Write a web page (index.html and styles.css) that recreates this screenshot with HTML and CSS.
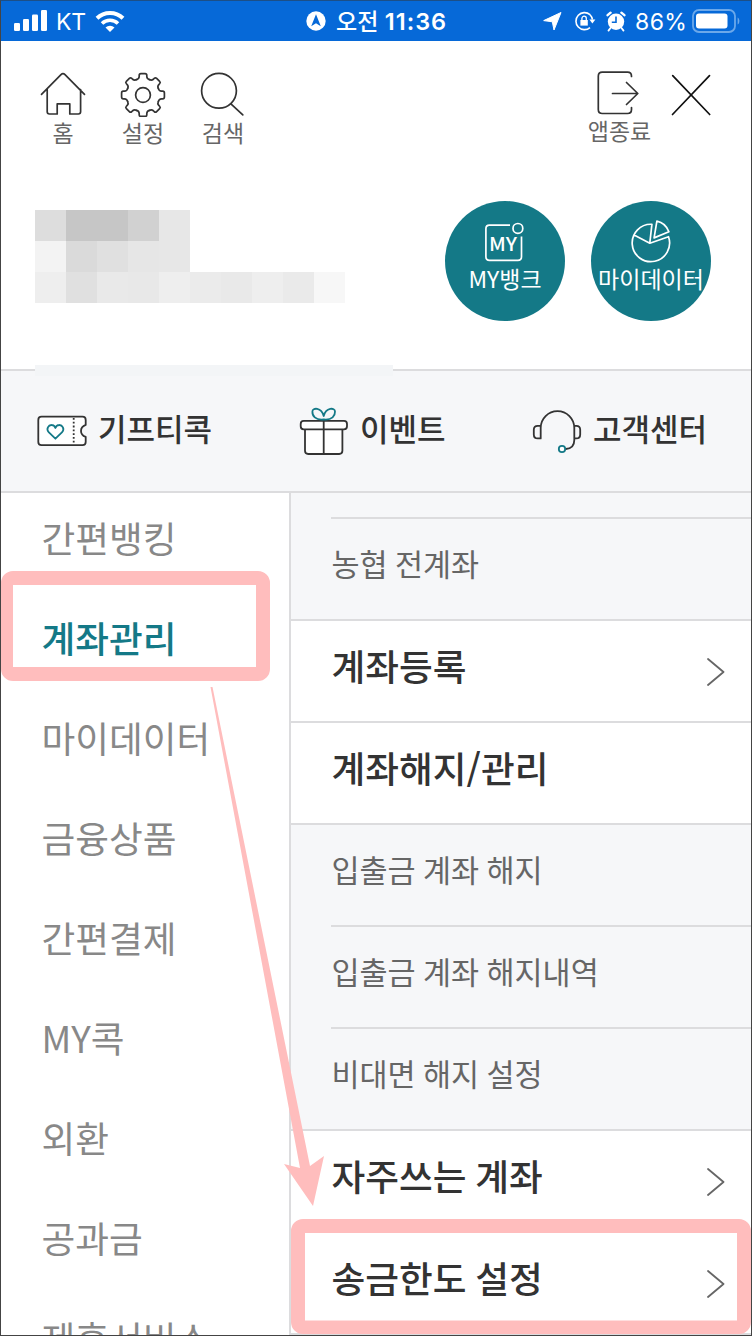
FILE: index.html
```html
<!DOCTYPE html>
<html lang="ko">
<head>
<meta charset="utf-8">
<title>전체메뉴</title>
<link rel="stylesheet" href="styles.css">
</head>
<body>
<div class="screen">
  <div class="status">
    <div class="status-left">
      <svg width="33" height="22" viewBox="14 10 33 22" fill="#fff"><rect x="14" y="23" width="6" height="8" rx="1.3"/><rect x="23" y="19" width="6" height="12" rx="1.3"/><rect x="32" y="14.5" width="6" height="16.5" rx="1.3"/><rect x="41" y="10" width="6" height="21" rx="1.3"/></svg>
      <span class="carrier">KT</span>
      <svg width="30" height="22" viewBox="0 0 30 22" fill="none" stroke="#fff" stroke-width="4"><path d="M2 8.3a18.6 18.6 0 0 1 26 0"/><path d="M7 13.5a11.5 11.5 0 0 1 16 0" stroke-width="3.6"/><path d="M10.5 17.6a6.5 6.5 0 0 1 9 0L15 22z" fill="#fff" stroke="none"/></svg>
    </div>
    <div class="status-mid">
      <svg width="20" height="20" viewBox="0 0 20 20"><circle cx="10" cy="10" r="9.7" fill="#fff"/><path d="M10 3.3l4.8 12L10 12.2l-4.8 3.1z" fill="#0669d8"/></svg>
      <span class="time">오전 <b>11:36</b></span>
    </div>
    <div class="status-right">
      <svg width="19" height="19" viewBox="0 0 19 19"><path d="M18 .5L11 18 9.3 9.8 .7 8.6z" fill="#fff" stroke="#fff" stroke-linejoin="round"/></svg>
      <svg class="lock" width="22" height="20" viewBox="0 0 22 20" fill="none" stroke="#fff" stroke-width="1.6"><path d="M16 3.7A8.5 8.5 0 1 0 16 16.6M16 3.7a8.5 8.5 0 0 1 2.5 5"/><path d="M15.4 8.4h6l-3 4z" fill="#fff" stroke="none"/><rect x="6.4" y="9" width="7.4" height="5.6" fill="#fff" stroke="none"/><path d="M7.9 9V7.4a2.2 2.2 0 0 1 4.4 0V9" stroke-width="1.3"/></svg>
      <svg class="alarm" width="20" height="21" viewBox="0 0 20 21"><circle cx="10" cy="10.8" r="8.2" fill="#fff"/><path d="M10 5.5v5.7H5.8" fill="none" stroke="#0669d8" stroke-width="1.6"/><path d="M1.6 4.2l3-2.5M18.4 4.2l-3-2.5" stroke="#fff" stroke-width="2.4" stroke-linecap="round"/><path d="M4.5 17l-2 2.6M15.5 17l2 2.6" stroke="#fff" stroke-width="1.8" stroke-linecap="round"/></svg>
      <span class="percent">86%</span>
      <svg class="battery" width="49" height="24" viewBox="0 0 49 24"><rect x="1" y="1" width="42" height="22" rx="6" fill="none" stroke="#6ba8ea" stroke-width="1.8"/><rect x="4" y="4.5" width="31.5" height="15" rx="3" fill="#fff"/><path d="M45.6 8.5c2.4 1 2.4 6 0 7z" fill="#6ba8ea"/></svg>
    </div>
  </div>

  <header class="top">
    <nav class="tools">
      <a class="tool"><svg width="46" height="46" viewBox="40 71 46 46"><path d="M41.5 94.3L61 74.6q2-2 4 0l19.500 19.700M47.200 89.500v22.300q0 2.200 2.200 2.200h7.800v-10.200h12.600V114h8.600q2.200 0 2.200-2.200V89.500"/></svg><span>홈</span></a>
      <a class="tool"><svg width="46" height="46" viewBox="-23 -24 46 46"><defs><path id="tooth" d="M-6.4-15.4Q-4-16-3.8-18.5v-1.2Q-3.8-21.4-2.1-21.4H2.1Q3.8-21.4 3.8-19.7v1.2Q4-16 6.4-15.4"/></defs><use href="#tooth"/><use href="#tooth" transform="rotate(45)"/><use href="#tooth" transform="rotate(90)"/><use href="#tooth" transform="rotate(135)"/><use href="#tooth" transform="rotate(180)"/><use href="#tooth" transform="rotate(225)"/><use href="#tooth" transform="rotate(270)"/><use href="#tooth" transform="rotate(315)"/><circle r="7.4"/></svg><span>설정</span></a>
      <a class="tool"><svg width="46" height="46" viewBox="200 71 46 46"><circle cx="219" cy="90.8" r="17.4"/><path d="M230.9 103.8L242.8 114.8"/></svg><span>검색</span></a>
    </nav>
    <div class="exit-tools">
      <a class="tool exit"><svg width="46" height="46" viewBox="594.5 69.500 46 46"><path d="M631 76v-.3q0-4-4-4h-25.200q-4 0-4 4V109q0 4 4 4H627q4 0 4-4v-2M612 93h25M626 82l11.300 11L626 104"/></svg><span>앱종료</span></a>
      <svg class="close" width="40" height="42" viewBox="671 74 40 42"><path d="M672.7 75.7l37 38.8M709.5 75.7l-37 38.8"/></svg>
    </div>
  </header>

  <section class="profile">
    <div class="mosaic">
      <i class="g-dd"></i><i class="g-c5"></i><i class="g-c5"></i><i class="g-d1"></i><i class="g-e7"></i><i></i><i></i><i></i><i></i><i></i>
      <i class="g-f3"></i><i class="g-da"></i><i class="g-e0"></i><i class="g-e6"></i><i class="g-e7"></i><i></i><i></i><i></i><i></i><i></i>
      <i class="g-ee"></i><i class="g-e0"></i><i class="g-e9"></i><i class="g-e8"></i><i class="g-ee"></i><i class="g-eb"></i><i class="g-e9"></i><i class="g-ee"></i><i class="g-ea"></i><i class="g-f7"></i>
    </div>
    <div class="rounds">
      <a class="round"><svg width="40" height="44" viewBox="484.5 220 40 44"><path d="M509.500 225.200H489q-3.600 0-3.600 3.600v28q0 3.600 3.600 3.600h28.400q3.600 0 3.600-3.600V236.500"/><circle cx="517.400" cy="228.400" r="4.900"/><text x="488.500" y="251" textLength="28" lengthAdjust="spacingAndGlyphs">MY</text></svg><span>MY뱅크</span></a>
      <a class="round"><svg width="40" height="44" viewBox="631.500 220 40 44"><path d="M669 236.700A18.700 18.700 0 1 1 652.400 224.300L650.300 243.200zM650.300 243.200L634.600 235M654.600 237.900l2.800-16.700q8.500 1.800 12 10.500z"/></svg><span>마이데이터</span></a>
    </div>
    <div class="scrap"></div>
  </section>

  <nav class="quick">
    <a class="q1"><svg width="50" height="50" viewBox="37 406 50 50"><path d="M41.500 416.700h41q3.200 0 3.200 3.200v5q-4.700 1.800-4.700 6t4.700 6v5q0 3.200-3.200 3.200h-41q-3.200 0-3.200-3.200v-22q0-3.200 3.200-3.200z" fill="#fff"/><path d="M73.700 418v26" stroke-dasharray="1.800 2"/><path class="teal" d="M55.400 438.700l-6.500-6.300c-3.300-3.600-.3-7.500 2.700-7.400 2 0 3.200 1.300 3.800 3 .6-1.700 1.800-3 3.800-3 3-.1 6 3.800 2.700 7.400z"/></svg><span>기프티콕</span></a>
    <a class="q2"><svg width="50" height="50" viewBox="299.300 406 50 50"><path d="M305.300 429.500v21.300q0 3.200 3.200 3.200h31q3.200 0 3.200-3.200v-21.300" fill="#fff"/><rect x="301" y="420.900" width="46.300" height="8.400" rx="3" fill="#fff"/><path d="M324 421v33"/><path class="teal" d="M324 419.500c-8.500 1-11.500-4-11.300-8 0-4 9-4.500 11.300 4.500 2.300-9 11.300-8.500 11.300-4.500.2 4-2.800 9-11.300 8z"/></svg><span>이벤트</span></a>
    <a class="q3"><svg width="50" height="50" viewBox="532 406 50 50"><path d="M540.700 438.500v-10.500a16.700 16.700 0 0 1 33.600 0v12q0 8.500-8.500 9M540.700 425.800h-3q-3.900 0-3.900 4v4.600q0 4 3.900 4h3zM574.300 425.800h2q3.900 0 3.900 4v4.600q0 4-3.900 4h-2z"/><circle class="teal" cx="562" cy="449" r="3.200" fill="#fff"/></svg><span>고객센터</span></a>
  </nav>

  <main class="menu">
    <ul class="cats">
      <li>간편뱅킹</li>
      <li class="on">계좌관리</li>
      <li>마이데이터</li>
      <li>금융상품</li>
      <li>간편결제</li>
      <li>MY콕</li>
      <li>외환</li>
      <li>공과금</li>
      <li>제휴서비스</li>
    </ul>
    <div class="items">
      <div class="group first"><div class="sub stub"></div><div class="sub">농협 전계좌</div></div>
      <div class="row"><span>계좌등록</span><svg class="chev" width="18" height="30" viewBox="0 0 18 30"><path d="M1 2l15.500 13L1 28"/></svg></div>
      <div class="row"><span>계좌해지/관리</span></div>
      <div class="group"><div class="sub">입출금 계좌 해지</div><div class="sub">입출금 계좌 해지내역</div><div class="sub">비대면 해지 설정</div></div>
      <div class="row"><span>자주쓰는 계좌</span><svg class="chev" width="18" height="30" viewBox="0 0 18 30"><path d="M1 2l15.500 13L1 28"/></svg></div>
      <div class="row"><span>송금한도 설정</span><svg class="chev" width="18" height="30" viewBox="0 0 18 30"><path d="M1 2l15.500 13L1 28"/></svg></div>
    </div>
  </main>

  <svg class="marks" width="752" height="1336" viewBox="0 0 752 1336">
    <path fill-rule="evenodd" d="M13 571H258a12 12 0 0 1 12 12V669a12 12 0 0 1-12 12H13a12 12 0 0 1-12-12V583a12 12 0 0 1 12-12zM13 585V667H256V585z"/>
    <path fill-rule="evenodd" d="M303 1219H739a12 12 0 0 1 12 12V1322a12 12 0 0 1-12 12H303a12 12 0 0 1-12-12V1231a12 12 0 0 1 12-12zM305 1233V1320.500H737V1233z"/>
    <path d="M210.500 687h2L310 1166l14-10-11 50-29-42 16 4z"/>
  </svg>
  <div class="frame"></div>
</div>
</body>
</html>
```

FILE: styles.css
```css
* { box-sizing: border-box; }
body { margin: 0; background: #fff; font-family: "Noto Sans CJK KR", "Noto Sans", sans-serif; color: #333; }
ul { list-style: none; margin: 0; padding: 0; }
svg { display: block; flex: none; }
.screen { position: relative; display: flex; flex-direction: column; width: 752px; height: 1336px; overflow: hidden; }
.frame { position: absolute; inset: 0; border: 1px solid #444; border-top-color: #1c4f87; pointer-events: none; }
.marks { position: absolute; inset: 0; fill: #ffbdbd; pointer-events: none; }

.status { display: grid; grid-template-columns: 306px 1fr auto; align-items: center; height: 41px; flex: none; padding: 1px 11px 0 0; background: #0669d8; color: #fff; }
.status-left, .status-mid, .status-right { display: flex; align-items: center; height: 39px; }
.status-left { padding-left: 14px; gap: 9px; }
.carrier { width: 30px; margin-top: 2px; font: 23px/39px Inter, sans-serif; letter-spacing: -.3px; }
.time { margin-left: 10px; font-size: 23px; line-height: 37px; font-weight: 500; white-space: nowrap; }
.time b { font-family: Inter, sans-serif; font-weight: 600; font-size: 23.500px; letter-spacing: 1px; }
.lock { margin-left: 12px; }
.alarm { margin-left: 10px; }
.percent { margin: 2px 7px 0 9px; width: 50px; font: 23px/39px Inter, sans-serif; letter-spacing: .4px; white-space: nowrap; }
.battery { margin-top: -1px; }

.top { display: flex; justify-content: space-between; height: 129px; flex: none; padding: 30px 41px 0 23px; }
.tools, .exit-tools { display: flex; }
.tool { display: flex; flex-direction: column; align-items: center; width: 80px; color: #666; font-size: 23px; line-height: 30px; }
.tool svg, .close { fill: none; stroke: #333; stroke-width: 1.700; stroke-linecap: round; stroke-linejoin: round; }
.exit { margin-top: -1px; width: 92px; padding-left: 3px; line-height: 28px; }
.exit svg { margin-right: 4px; }
.exit-tools .close { margin: 3px 0 0 7px; stroke: #111; }

.profile { position: relative; display: flex; justify-content: space-between; height: 201px; flex: none; padding: 31px 41px 0 35px; border-bottom: 2px solid #dcdcde; }
.mosaic { display: grid; grid-template-columns: repeat(10, 31px); grid-auto-rows: 31px; margin-top: 9px; height: 93px; }
.g-c5 { background: #c6c6c6; } .g-d1 { background: #d1d1d1; } .g-da { background: #dadada; }
.g-dd { background: #dddddd; } .g-e0 { background: #e0e0e0; } .g-e6 { background: #e6e6e6; }
.g-e7 { background: #e7e7e7; } .g-e8 { background: #e8e8e8; } .g-e9 { background: #e9e9e9; }
.g-ea { background: #eaeaea; } .g-eb { background: #ebebeb; } .g-ee { background: #eeeeee; }
.g-f3 { background: #f3f3f3; } .g-f7 { background: #f7f7f7; }
.rounds { display: flex; gap: 26px; }
.round { display: flex; flex-direction: column; align-items: center; width: 120px; height: 120px; padding-top: 19px; border-radius: 50%; background: #147987; color: #fff; font-size: 23px; line-height: 29px; white-space: nowrap; }
.round svg { overflow: visible; fill: none; stroke: #fff; stroke-width: 1.700; stroke-linejoin: round; }
.round text { fill: #fff; stroke: none; font: 500 19px "Noto Sans CJK KR", sans-serif; }
.scrap { position: absolute; left: 35px; top: 195px; width: 358px; height: 11px; background: #f3f5f7; }

.quick { display: flex; height: 122px; flex: none; background: #f6f7f9; border-bottom: 2px solid #dcdcde; }
.quick a { display: flex; padding-top: 35px; font-size: 31px; font-weight: 500; line-height: 43px; white-space: nowrap; }
.quick svg { margin-right: 11px; fill: none; stroke: #333; stroke-width: 1.800; stroke-linejoin: round; }
.quick .teal { stroke: #147987; }
.q1 { width: 262px; margin-left: 37px; }
.q2 { width: 233px; }

.menu { display: flex; height: 843px; overflow: hidden; }
.cats { width: 289px; flex: none; margin-top: -4px; }
.cats li { height: 100px; padding-left: 41.500px; font-size: 36.700px; line-height: 97px; color: #888; white-space: nowrap; }
.cats .on { color: #147987; font-weight: 500; }
.items { flex: 1; border-left: 2px solid #dcdcde; }
.group { padding-left: 40px; background: #f6f7f9; border-bottom: 2px solid #dcdcde; }
.sub { height: 102px; border-bottom: 2px solid #dcdcde; padding-left: .5px; font-size: 30.500px; line-height: 88px; word-spacing: -1.200px; color: #666; white-space: nowrap; }
.sub:last-child { height: 100px; border-bottom: 0; }
.stub { height: 26px; }
.row { display: flex; justify-content: space-between; height: 102px; padding: 0 27px 0 40.500px; border-bottom: 2px solid #dcdcde; font-size: 36.700px; font-weight: 500; line-height: 88px; word-spacing: -1.500px; white-space: nowrap; }
.chev { margin-top: 36px; fill: none; stroke: #666; stroke-width: 1.800; stroke-linecap: round; stroke-linejoin: round; }
```
